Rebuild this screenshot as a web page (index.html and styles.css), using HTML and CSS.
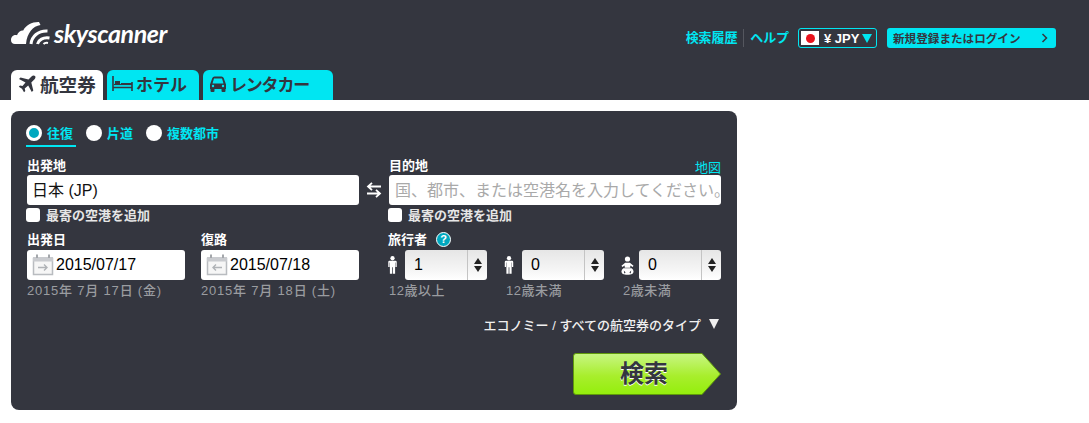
FILE: index.html
```html
<!DOCTYPE html>
<html lang="ja">
<head>
<meta charset="utf-8">
<title>Skyscanner</title>
<link rel="stylesheet" href="styles.css">
</head>
<body>
<svg class="defs" width="0" height="0" aria-hidden="true">
  <defs>
    <symbol id="cal" viewBox="0 0 22 22">
      <path d="M1.5 4.500h19v16h-19z" fill="#f6f6f6" stroke="#b9bcc0" stroke-width="1.500"/>
      <path d="M1 3h20v4.500H1z" fill="#c9cbcf"/>
      <path d="M5 .5v3.500M17 .5v3.500" stroke="#a4a7ab" stroke-width="2"/>
    </symbol>
    <symbol id="adult" viewBox="0 0 10 20">
      <circle cx="5" cy="2.500" r="2.400" fill="#fff"/>
      <path d="M1.600 5.400h6.800q1.300 0 1.300 1.300v5.600H8.300V7.300H7.900V19.600H5.400V12.500H4.600V19.600H2.100V7.300H1.700v5H.3V6.700q0-1.300 1.300-1.300z" fill="#fff"/>
    </symbol>
    <symbol id="baby" viewBox="0 0 14 20">
      <circle cx="7" cy="3" r="2.800" fill="#fff"/>
      <path d="M4.500 7h5l4 3.200-1 1.300L10 10v2.300h-6V10l-2.500 1.500-1-1.300z" fill="#fff"/>
      <path d="M2.500 13h9q2 1.500 2 3.500c0 2.200-2 3.500-6.500 3.500S.5 18.700.5 16.500Q.5 14.500 2.500 13z" fill="#fff"/>
      <path d="M3 15.500l2 2-1.500 1.200zM11 15.500l-2 2 1.500 1.200z" fill="#34363f"/>
    </symbol>
    <linearGradient id="go" x1="0" y1="0" x2="0" y2="1">
      <stop offset="0" stop-color="#c8f684"/><stop offset=".55" stop-color="#a8ee2c"/><stop offset="1" stop-color="#94ee0c"/>
    </linearGradient>
  </defs>
</svg>

<header class="top">
  <div class="bar">
    <a class="logo">
      <svg class="logo-mark" width="40" height="24" viewBox="0 0 40 24">
        <path d="M0 19C0 15.500 3 13.500 6 14.200 7 10.800 10 9.200 12.200 9.500 15 4 21 .8 28 1L29.500 4C22 5 16 12 15 23H4C1.500 23 0 21.500 0 19z" fill="#fff"/>
        <path d="M20 23C20.800 15.500 27 9.500 36.500 10M26.500 23C27.500 19 32 16 38.500 17" fill="none" stroke="#fff" stroke-width="3"/>
        <path d="M32.500 23C33.500 22 35 21.500 37 22" fill="none" stroke="#fff" stroke-width="2"/>
      </svg>
      <span class="logo-text">skyscanner</span>
    </a>
    <nav class="nav">
      <a class="nav-link">検索履歴</a>
      <span class="nav-sep"></span>
      <a class="nav-link">ヘルプ</a>
      <a class="currency">
        <span class="flag"><i class="flag-dot"></i></span>
        <span class="cur-text">¥ JPY</span>
        <span class="cur-arrow"></span>
      </a>
      <a class="login"><span>新規登録またはログイン</span>
        <svg width="7" height="10" viewBox="0 0 7 10"><path d="M1.500 1l4 4-4 4" fill="none" stroke="#34363f" stroke-width="1.500"/></svg>
      </a>
    </nav>
  </div>
  <div class="tabs">
    <a class="tab tab-active">
      <svg width="18" height="18" viewBox="0 0 18 18"><path d="M17 1c-1-1-2.500-.5-3.500.5L10.500 4.500 2.500 2.500 1 4l6.500 3.500-3 3.500-2.500-.5L.8 11.700l3.200 2 2 3.500 1.300-1.200-.6-2.600 3.500-3L13.800 17l1.500-1.500-2-8 3-3C17.300 3.500 18 2 17 1z" fill="#34363f"/></svg>
      <span>航空券</span>
    </a>
    <a class="tab">
      <svg width="21" height="15" viewBox="0 0 21 15"><path d="M1 0v15M20 6v9M1 11.500h19" fill="none" stroke="#34363f" stroke-width="1.600"/><rect x="3" y="5" width="5" height="3" fill="#34363f"/><path d="M2 8.500h18" stroke="#34363f" stroke-width="1.200"/><path d="M9 7.500h11" stroke="#34363f" stroke-width="1"/></svg>
      <span>ホテル</span>
    </a>
    <a class="tab tab-wide">
      <svg width="18" height="16" viewBox="0 0 18 16"><path d="M1 13V8.500L3.300 2Q3.800 .5 5.500 .5h7q1.700 0 2.200 1.500L17 8.500V13z M3.500 7.500h11L13 2.500H5z" fill="#34363f" fill-rule="evenodd"/><rect x="1.500" y="12" width="4" height="4" rx="1" fill="#34363f"/><rect x="12.500" y="12" width="4" height="4" rx="1" fill="#34363f"/><circle cx="4" cy="10" r="1.200" fill="#00e6f2"/><circle cx="14" cy="10" r="1.200" fill="#00e6f2"/></svg>
      <span class="tab-tight">レンタカー</span>
    </a>
  </div>
</header>

<main class="panel">
  <div class="trip">
    <label class="trip-item trip-on"><i class="radio radio-on"></i>往復</label>
    <label class="trip-item"><i class="radio"></i>片道</label>
    <label class="trip-item"><i class="radio"></i>複数都市</label>
  </div>

  <div class="places">
    <div class="col">
      <div class="label-row"><span class="label">出発地</span></div>
      <div class="field place-field"><span class="value-cjk">日本 (JP)</span></div>
      <label class="near"><i class="check"></i>最寄の空港を追加</label>
    </div>
    <div class="swap">
      <svg width="16" height="16" viewBox="0 0 16 16"><path d="M15 4.500H2M6 .8L2 4.500l4 3.700M1 11.500h13M10 7.800l4 3.700-4 3.700" fill="none" stroke="#fff" stroke-width="1.800"/></svg>
    </div>
    <div class="col">
      <div class="label-row"><span class="label">目的地</span><a class="map">地図</a></div>
      <div class="field place-field"><span class="placeholder">国、都市、または空港名を入力してください。</span></div>
      <label class="near"><i class="check"></i>最寄の空港を追加</label>
    </div>
  </div>

  <div class="details">
    <div class="dates">
      <div class="date">
        <span class="label">出発日</span>
        <div class="field date-field">
          <svg class="cal" width="22" height="22"><use href="#cal"/><path d="M6 13.500h9M12 10.500l3 3-3 3" fill="none" stroke="#b0b3b7" stroke-width="1.400"/></svg>
          <span class="value">2015/07/17</span>
        </div>
        <span class="hint">2015年 7月 17日 (金)</span>
      </div>
      <div class="date">
        <span class="label">復路</span>
        <div class="field date-field">
          <svg class="cal" width="22" height="22"><use href="#cal"/><path d="M16 13.500H7M10 10.500l-3 3 3 3" fill="none" stroke="#b0b3b7" stroke-width="1.400"/></svg>
          <span class="value">2015/07/18</span>
        </div>
        <span class="hint">2015年 7月 18日 (土)</span>
      </div>
    </div>
    <div class="travellers">
      <div class="trav-head"><span class="label">旅行者</span><i class="help">?</i></div>
      <div class="trav-row">
        <div class="trav">
          <div class="trav-line">
            <svg class="person" width="9" height="18"><use href="#adult"/></svg>
            <div class="select"><span class="sel-val">1</span><span class="spin"><i class="up"></i><i class="down"></i></span></div>
          </div>
          <span class="hint trav-hint">12歳以上</span>
        </div>
        <div class="trav">
          <div class="trav-line">
            <svg class="person" width="10" height="18"><use href="#adult"/></svg>
            <div class="select"><span class="sel-val">0</span><span class="spin"><i class="up"></i><i class="down"></i></span></div>
          </div>
          <span class="hint trav-hint">12歳未満</span>
        </div>
        <div class="trav">
          <div class="trav-line">
            <svg class="person" width="13" height="19"><use href="#baby"/></svg>
            <div class="select"><span class="sel-val">0</span><span class="spin"><i class="up"></i><i class="down"></i></span></div>
          </div>
          <span class="hint trav-hint">2歳未満</span>
        </div>
      </div>
    </div>
  </div>

  <div class="cabin"><span>エコノミー / すべての航空券のタイプ</span><i class="cabin-arrow"></i></div>

  <div class="actions">
    <button class="search" type="button">
      <svg class="search-bg" width="148" height="42" viewBox="0 0 148 42"><path d="M3 .5H129L147.500 21 129 41.500H3Q.5 41.500.5 39V3Q.5.5 3 .5z" fill="url(#go)" stroke="#5f9a0a"/></svg>
      <span class="search-text">検索</span>
    </button>
  </div>
</main>
</body>
</html>
```

FILE: styles.css
```css
* { box-sizing: border-box; }
html, body { margin: 0; padding: 0; background: #fff; }
body {
  width: 1089px;
  height: 423px;
  overflow: hidden;
  font-family: "Liberation Sans", "Noto Sans CJK JP", sans-serif;
  color: #fff;
}
.defs { position: absolute; }
i { font-style: normal; display: block; }

/* header */
.top { height: 100px; background: #34363f; display: flex; flex-direction: column; }
.bar { height: 70px; padding: 0 33px 0 11px; display: flex; justify-content: space-between; align-items: flex-start; }
.logo { display: flex; align-items: flex-start; margin-top: 21px; height: 26px; }
.logo-mark { display: block; }
.logo-text {
  font-family: Lato, sans-serif;
  font-style: italic;
  font-weight: 700;
  font-size: 25px;
  line-height: 26px;
  margin: -1px 0 0 3px;
  letter-spacing: -0.4px;
  color: #fff;
}
.nav { display: flex; align-items: center; margin-top: 28px; height: 20px; }
.nav-link { color: #00e6f2; font-size: 13px; font-weight: 700; line-height: 20px; letter-spacing: -.1px; }
.nav-sep { width: 1px; height: 18px; background: #55575f; margin: 0 6px; }
.currency {
  margin-left: 9px;
  width: 79px;
  height: 20px;
  border: 1px solid #00e6f2;
  border-radius: 3px;
  display: flex;
  align-items: center;
  padding-left: 2px;
}
.flag { width: 18px; height: 14px; background: #fff; display: flex; align-items: center; justify-content: center; }
.flag-dot { width: 9px; height: 9px; border-radius: 50%; background: #e8121c; }
.cur-text { margin-left: 5px; font-size: 13px; font-weight: 700; white-space: nowrap; }
.cur-arrow { margin-left: 3px; width: 0; height: 0; border-left: 5px solid transparent; border-right: 5px solid transparent; border-top: 9px solid #00e6f2; }
.login {
  margin-left: 10px;
  width: 169px;
  height: 20px;
  background: #00e6f2;
  border-radius: 3px;
  color: #34363f;
  font-size: 11.6px;
  font-weight: 700;
  display: flex;
  align-items: center;
  justify-content: space-between;
  padding: 0 8px 0 6px;
  white-space: nowrap;
}
.tabs { display: flex; gap: 4px; padding-left: 11px; height: 30px; }
.tab {
  width: 92px;
  height: 30px;
  background: #00e6f2;
  border-radius: 6px 6px 0 0;
  color: #34363f;
  font-size: 17px;
  font-weight: 700;
  display: flex;
  align-items: center;
  gap: 3px;
  padding: 0 0 3px 5px;
  white-space: nowrap;
}
.tab-active { background: #fff; gap: 4px; padding-left: 7px; font-size: 18.600px; }
.tab-wide { width: 130px; padding-left: 6px; gap: 3px; }
.tab-tight { letter-spacing: -1.200px; }

/* panel */
.panel {
  margin: 11px 0 0 11px;
  width: 726px;
  height: 299px;
  background: #34363f;
  border-radius: 8px;
  padding: 14px 16px 0;
  display: flex;
  flex-direction: column;
}
.trip { display: flex; height: 22px; margin-left: -1px; }
.trip-item {
  display: flex;
  align-items: flex-start;
  gap: 5px;
  width: 60px;
  color: #00e6f2;
  font-size: 13px;
  font-weight: 700;
  line-height: 18px;
  height: 22px;
  white-space: nowrap;
}
.trip-on { border-bottom: 2px solid #00e6f2; width: 50px; margin-right: 10px; }
.radio { width: 16px; height: 16px; border-radius: 50%; background: #fff; flex: none; }
.radio-on { border: 3px solid #fff; background: #00a8bf; }
.places { display: flex; margin-top: 11px; }
.col { width: 332px; display: flex; flex-direction: column; }
.label-row { display: flex; justify-content: space-between; align-items: flex-start; height: 17px; }
.label { font-size: 13px; font-weight: 700; line-height: 15px; color: #fff; display: block; }
.map { color: #00e6f2; font-size: 13px; line-height: 14px; margin-top: 3px; }
.field { background: #fff; border-radius: 3px; height: 30px; display: flex; align-items: center; color: #000; font-size: 16px; }
.place-field { padding: 0 0 2px 6px; overflow: hidden; white-space: nowrap; }
.value-cjk { color: #111; font-size: 16px; margin-left: -1px; }
.placeholder { color: #a9a9a9; font-size: 16px; }
.swap { width: 30px; display: flex; align-items: center; justify-content: center; padding-top: 16px; height: 48px; }
.near { display: flex; align-items: center; gap: 6px; height: 19px; margin: 0 0 1px -1px; font-size: 13px; font-weight: 700; color: #e6e6e6; white-space: nowrap; }
.check { width: 14px; height: 14px; border-radius: 3px; background: #fff; flex: none; }

.details { display: flex; margin-top: 7px; }
.dates { width: 362px; display: flex; gap: 16px; }
.date { width: 158px; display: flex; flex-direction: column; }
.date-field { margin-top: 3px; padding-left: 5px; gap: 2px; }
.cal { flex: none; }
.value { color: #000; font-size: 16px; }
.hint { font-size: 13px; color: #9a9ca0; font-weight: 500; line-height: 16px; margin-top: 3px; letter-spacing: .8px; white-space: nowrap; }
.travellers { width: 332px; }
.trav-head { display: flex; align-items: center; gap: 9px; height: 15px; margin-left: -1px; }
.help { width: 15px; height: 15px; border-radius: 50%; background: #00a8bf; border: 1px solid #fff; color: #fff; font-size: 11px; font-weight: 700; line-height: 13px; text-align: center; }
.trav-row { display: flex; justify-content: space-between; width: 333px; margin-top: 3px; margin-left: -1px; }
.trav { width: 99px; display: flex; flex-direction: column; }
.trav + .trav .person { margin-left: -1px; }
.trav-line { display: flex; justify-content: space-between; align-items: center; height: 30px; }
.person { flex: none; }
.select {
  width: 82px;
  height: 30px;
  border-radius: 3px;
  background: linear-gradient(#e6e6e6, #f6f6f6 70%, #fff);
  display: flex;
  align-items: center;
  justify-content: space-between;
  color: #000;
  font-size: 16px;
}
.sel-val { padding-left: 9px; }
.spin { width: 20px; height: 30px; border-left: 1px solid #c4c4c4; display: flex; flex-direction: column; align-items: center; justify-content: center; gap: 2px; }
.up, .down { width: 0; height: 0; border-left: 4px solid transparent; border-right: 4px solid transparent; }
.up { border-bottom: 6px solid #222; }
.down { border-top: 6px solid #222; }
.trav-hint { margin-left: 1px; letter-spacing: .5px; }

.cabin { display: flex; justify-content: flex-end; align-items: center; gap: 8px; height: 18px; margin-top: 16px; padding-right: 2px; font-size: 13px; color: #f0f0f0; font-weight: 500; white-space: nowrap; }
.cabin-arrow { width: 0; height: 0; border-left: 5.500px solid transparent; border-right: 5.500px solid transparent; border-top: 10px solid #f0f0f0; }
.actions { display: flex; justify-content: flex-end; margin-top: 20px; }
.search { position: relative; width: 148px; height: 42px; border: 0; padding: 0 6px 0 0; background: none; font: inherit; display: flex; align-items: center; justify-content: center; }
.search-bg { position: absolute; left: 0; top: 0; }
.search-text { position: relative; font-size: 24px; font-weight: 700; color: #34363f; text-shadow: 0 1px 0 #fff; line-height: 42px; }
```
